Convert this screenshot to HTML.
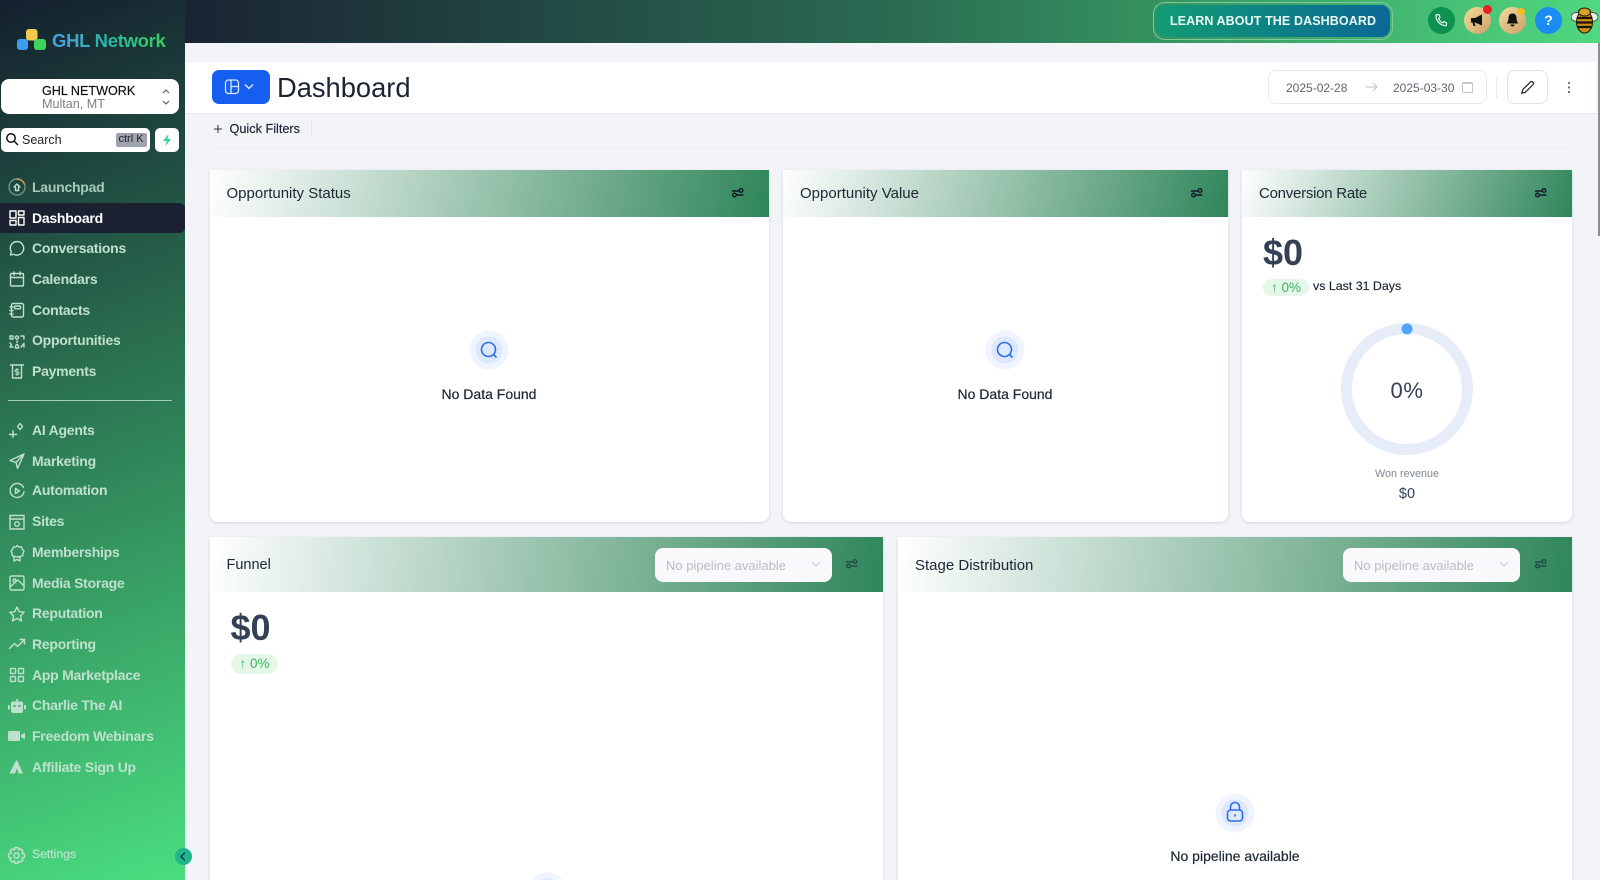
<!DOCTYPE html>
<html><head><meta charset="utf-8"><title>Dashboard</title>
<style>
*{box-sizing:border-box;margin:0;padding:0}
html,body{width:1600px;height:880px;overflow:hidden;background:#f2f4f8;font-family:"Liberation Sans",sans-serif;color:#101828}
#w{position:absolute;left:0;top:0;width:1600px;height:880px;overflow:hidden;background:#f2f4f8}
.a{position:absolute}
#side{left:0;top:0;width:185px;height:880px;background:linear-gradient(160deg,#14202e 0%,#2f8258 52%,#4ade80 100%)}
#top{left:185px;top:0;width:1415px;height:43px;background:linear-gradient(90deg,#1a2433 0%,#2a6b52 50%,#379a62 72%,#50d880 100%)}
.nav{position:absolute;left:32px;font-size:14px;letter-spacing:-.25px;font-weight:bold;color:#bfe0cd;line-height:18px;white-space:nowrap}
.ni{position:absolute;left:8px;width:18px;height:18px;fill:none;stroke:#bfe0cd;stroke-width:1.4;stroke-linecap:round;stroke-linejoin:round}
.card{position:absolute;background:#fff;border-radius:0 0 8px 8px;box-shadow:0 1px 3px rgba(16,24,40,.14);overflow:hidden}
.ch{position:absolute;left:0;top:0;right:0;background:linear-gradient(100deg,#fff 0%,#2f855a 100%);font-size:15px;color:#1d2733}
.ch span{position:absolute;left:17px;white-space:nowrap}
.fi{position:absolute;width:14px;height:14px;fill:none;stroke:#101828;stroke-width:1.4}
.sel{position:absolute;background:#f9f9fb;border-radius:8px;font-size:13px;color:#b9bcc4;line-height:36px;padding-left:11px;height:34px;width:177px}
.big{position:absolute;font-size:36px;font-weight:bold;color:#344054;line-height:36px}
.badge{position:absolute;background:#e4f7e9;color:#3fb560;border-radius:10px;font-size:13.5px;text-align:center}
.nd{position:absolute;font-size:14px;color:#1d2733;transform:translateX(-50%);white-space:nowrap;line-height:18px;-webkit-text-stroke:.2px #1d2733}
</style></head><body>
<div id="w">

<div class="a" id="side"></div>
<div class="a" id="top"></div>

<!-- logo -->
<svg class="a" style="left:15px;top:26px" width="34" height="26"><rect x="2" y="13" width="11" height="11" rx="3" fill="#3b9df0"/><rect x="11" y="3" width="11.500" height="11.500" rx="3" fill="#f5c74d"/><rect x="19" y="13" width="12" height="11" rx="3" fill="#3fd45a"/></svg>
<div class="a" style="left:52px;top:29px;font-size:18.5px;letter-spacing:-.3px;font-weight:bold;line-height:24px;background:linear-gradient(90deg,#4d9fe6,#2bb8a0 50%,#34d35c);-webkit-background-clip:text;background-clip:text;color:transparent;white-space:nowrap">GHL Network</div>

<!-- location -->
<div class="a" style="left:1px;top:79px;width:178px;height:35px;background:#fff;border-radius:8px"></div>
<div class="a" style="left:42px;top:84px;font-size:12.6px;line-height:14px;color:#111;white-space:nowrap;-webkit-text-stroke:.2px #111">GHL NETWORK</div>
<div class="a" style="left:42px;top:97px;font-size:12.6px;line-height:14px;color:#7b7f87;white-space:nowrap">Multan, MT</div>
<svg class="a" style="left:160px;top:87px" width="12" height="20" fill="none" stroke="#555" stroke-width="1.1"><path d="M3 6l3-3 3 3M3 14l3 3 3-3"/></svg>

<!-- search -->
<div class="a" style="left:1px;top:128px;width:149px;height:24px;background:#fff;border-radius:5px"></div>
<svg class="a" style="left:5px;top:132px" width="14" height="14" fill="none" stroke="#111" stroke-width="1.5"><circle cx="6" cy="6" r="4.2"/><path d="M9 9l4 4"/></svg>
<div class="a" style="left:22px;top:133px;font-size:12.5px;line-height:15px;color:#222">Search</div>
<div class="a" style="left:115.5px;top:133px;width:31px;height:14px;background:#9ea3af;border-radius:2px;font-size:11px;line-height:13px;text-align:center;color:#222">ctrl K</div>
<div class="a" style="left:155px;top:128px;width:24px;height:24px;background:#fff;border-radius:5px"></div>
<svg class="a" style="left:160px;top:133px" width="14" height="14" fill="#37d39a"><path d="M8.5 1L3 8h3.5L5.500 13 11 6H7.500z"/></svg>

<!-- nav -->
<svg class="ni" style="top:178px" viewBox="0 0 18 18"><circle cx="9" cy="9" r="8" stroke-opacity=".5"/><path d="M9 1a8 8 0 0 1 7.500 5" stroke="#d8965a"/><path d="M6 9l3-3 3 3M7.500 9v3.500h3V9"/></svg>
<div class="a" style="left:0;top:203px;width:185px;height:30px;background:#1b2130;border-radius:0 6px 6px 0"></div>
<svg class="ni" style="top:209px;stroke:#fff" viewBox="0 0 18 18"><rect x="2" y="2" width="6" height="7"/><rect x="10.500" y="2" width="5.500" height="4"/><rect x="2" y="11.500" width="6" height="4.500"/><rect x="10.500" y="8.500" width="5.500" height="7.500"/></svg>
<svg class="ni" style="top:239px" viewBox="0 0 18 18"><path d="M9 2.500a6.800 6.800 0 1 1-3.300 12.800L2.500 16l.8-3.200A6.800 6.800 0 0 1 9 2.500z"/></svg>
<svg class="ni" style="top:270px" viewBox="0 0 18 18"><rect x="2.500" y="3.500" width="13" height="12.500" rx="1"/><path d="M2.500 7.500h13M6 2v3M12 2v3"/></svg>
<svg class="ni" style="top:301px" viewBox="0 0 18 18"><rect x="3.500" y="2.500" width="12" height="13.500" rx="1.500"/><rect x="6.500" y="5" width="6" height="2.800" rx="1"/><path d="M2 6h3M2 9.500h3M2 13h3"/></svg>
<svg class="ni" style="top:332px" viewBox="0 0 18 18"><circle cx="9" cy="5.500" r="1.600"/><path d="M9 9v1.500M7.500 15a1.500 2.500 0 0 1 3 0v1h-3zM2 4h3v3H2zM13 4l3 .1-.1 3M2 11l1.500 1.500L2 15h3M13 15l3-3.500v3.500"/></svg>
<svg class="ni" style="top:362px" viewBox="0 0 18 18"><path d="M2.500 3h13M4.500 3v13h9V3"/><path d="M10.500 7.500H8.200a1 1 0 0 0 0 2.400h1.600a1 1 0 0 1 0 2.400H7.500M9 6.500v7" stroke-width="1"/></svg>

<div class="a" style="left:8px;top:400px;width:164px;height:1px;background:#a9cdb8"></div>

<svg class="ni" style="top:421px" viewBox="0 0 18 18"><path d="M12 2.500l2.600 3.100L12 8.600 9.600 5.600zM5 10v6.500M1.500 13.500h7"/></svg>
<svg class="ni" style="top:452px" viewBox="0 0 18 18"><path d="M16 2L2 8.500l6 2 1.500 6zM8 10.500L16 2"/></svg>
<svg class="ni" style="top:482px" viewBox="0 0 18 18"><path d="M15.500 5.500A7 7 0 1 0 16 10"/><path d="M7.500 6.500l4 2.500-4 2.500z"/></svg>
<svg class="ni" style="top:513px" viewBox="0 0 18 18"><rect x="2" y="2.500" width="14" height="13.500"/><path d="M2 6h14"/><circle cx="9" cy="11" r="2.300"/></svg>
<svg class="ni" style="top:544px" viewBox="0 0 18 18"><path d="M9 1.500l2 1.400 2.500.1.900 2.300 1.600 1.700-1 2.200-.3 2.500-2.400.7L9 13l-2.300-.6-2.400-.7-.3-2.500-1-2.200 1.600-1.700.9-2.300 2.500-.1zM6 13v4l3-1.500 3 1.500v-4"/></svg>
<svg class="ni" style="top:574px" viewBox="0 0 18 18"><rect x="2" y="2" width="14" height="14" rx="1.500"/><circle cx="6.500" cy="6.500" r="1.500"/><path d="M2 13l8-7 6 6"/></svg>
<svg class="ni" style="top:605px" viewBox="0 0 18 18"><path d="M9 2l2.200 4.700 5 .6-3.700 3.500 1 5.200L9 13.400 4.500 16l1-5.200L1.800 7.300l5-.6z"/></svg>
<svg class="ni" style="top:635px" viewBox="0 0 18 18"><path d="M1.500 13.500l5-5 3 3 7-7M12 4.500h4.500V9"/></svg>
<svg class="ni" style="top:666px" viewBox="0 0 18 18"><rect x="2.500" y="2.500" width="5" height="5" rx=".8"/><rect x="10.500" y="2.500" width="5" height="5" rx=".8"/><rect x="2.500" y="10.500" width="5" height="5" rx=".8"/><rect x="10.500" y="10.500" width="5" height="5" rx=".8"/></svg>
<svg class="ni" style="top:697px;fill:#bfe0cd;stroke:none" viewBox="0 0 18 18"><path d="M8.200 2h1.600v2.500H13a2 2 0 0 1 2 2V14a2 2 0 0 1-2 2H5a2 2 0 0 1-2-2V6.500a2 2 0 0 1 2-2h3.200z"/><rect x="0" y="8" width="2" height="4.500" rx="1"/><rect x="16" y="8" width="2" height="4.500" rx="1"/><circle cx="6.500" cy="9" r="1.100" fill="#3fa868"/><circle cx="11.500" cy="9" r="1.100" fill="#3fa868"/></svg>
<svg class="ni" style="top:727px;fill:#bfe0cd;stroke:none" viewBox="0 0 18 18"><rect x="0" y="4" width="12" height="10" rx="1.500"/><path d="M13 8l4-2.500v7L13 10z"/></svg>
<svg class="ni" style="top:758px;fill:#bfe0cd;stroke:none" viewBox="0 0 18 18"><path d="M8 2.500l1.200 0L15 15.500H10.500L9 10.500 7 15.500H1.500z"/></svg>
<svg class="ni" style="top:846px;left:7px;width:19px;height:19px" viewBox="0 0 18 18"><circle cx="9" cy="9" r="2.400"/><path d="M7.500 1.500h3l.5 2.200 2-1 2.100 2.100-1 2 2.400.7v3l-2.400.7 1 2-2.100 2.100-2-1-.5 2.200h-3l-.5-2.200-2 1-2.100-2.100 1-2L1.500 10.500v-3l2.400-.7-1-2L5 2.700l2 1z"/></svg>

<div class="nav" style="top:178px;opacity:.85">Launchpad</div>
<div class="nav" style="top:209px;color:#fff">Dashboard</div>
<div class="nav" style="top:239px">Conversations</div>
<div class="nav" style="top:270px">Calendars</div>
<div class="nav" style="top:301px">Contacts</div>
<div class="nav" style="top:331px">Opportunities</div>
<div class="nav" style="top:362px">Payments</div>
<div class="nav" style="top:421px">AI Agents</div>
<div class="nav" style="top:452px">Marketing</div>
<div class="nav" style="top:481px">Automation</div>
<div class="nav" style="top:512px">Sites</div>
<div class="nav" style="top:543px">Memberships</div>
<div class="nav" style="top:574px">Media Storage</div>
<div class="nav" style="top:604px">Reputation</div>
<div class="nav" style="top:635px">Reporting</div>
<div class="nav" style="top:666px">App Marketplace</div>
<div class="nav" style="top:696px">Charlie The AI</div>
<div class="nav" style="top:727px">Freedom Webinars</div>
<div class="nav" style="top:758px">Affiliate Sign Up</div>
<div class="nav" style="top:845px;font-size:12.2px;letter-spacing:0;font-weight:normal;-webkit-text-stroke:.2px #bfe0cd">Settings</div>

<div class="a" style="left:175px;top:848px;width:17px;height:17px;border-radius:50%;background:#1fb58e"></div>
<svg class="a" style="left:178px;top:851px" width="10" height="11" fill="none" stroke="#12433f" stroke-width="1.5"><path d="M7 1.500L3 5.500l4 4"/></svg>

<!-- top bar right -->
<div class="a" style="left:1153px;top:2px;width:240px;height:38px;border:1px solid #7fc9a2;border-radius:12px"></div>
<div class="a" style="left:1156px;top:5px;width:234px;height:32px;border-radius:9px;background:linear-gradient(90deg,#129b74,#0b6896);color:#eafaf3;font-size:12.5px;font-weight:bold;letter-spacing:.1px;line-height:32px;text-align:center;white-space:nowrap">LEARN ABOUT THE DASHBOARD</div>

<div class="a" style="left:1428px;top:7px;width:27px;height:27px;border-radius:50%;background:#0c9150"></div>
<svg class="a" style="left:1434px;top:13px" width="15" height="15" fill="none" stroke="#e8f7ee" stroke-width="1.2"><path d="M3 1.500l2 .2 1 2.800-1.300 1.200c.7 1.800 2 3.200 3.700 4.100l1.500-1.200 2.600 1.200v2c0 .6-.6 1-1.200.9C5.500 12 2 7.500 2 2.600c0-.6.400-1.100 1-1.100z"/></svg>

<div class="a" style="left:1463.500px;top:7px;width:27px;height:27px;border-radius:50%;background:linear-gradient(135deg,#f3dc9a,#c9a06a)"></div>
<svg class="a" style="left:1470px;top:13px" width="15" height="15" fill="#111"><path d="M1 5h4l7-3.500v11L5 9.500H4.500L5.500 13H3.500L2.500 9.500H1z"/></svg>
<div class="a" style="left:1483px;top:5px;width:9px;height:9px;border-radius:50%;background:#ee1c25"></div>

<div class="a" style="left:1499px;top:7px;width:27px;height:27px;border-radius:50%;background:linear-gradient(135deg,#f3dc9a,#c9a06a)"></div>
<svg class="a" style="left:1505px;top:12px" width="15" height="16" fill="#111"><path d="M7.500 1.500c2.800 0 4 2 4 4.500 0 3 1 4.500 2 5.500H1.500c1-1 2-2.500 2-5.500 0-2.500 1.200-4.500 4-4.500z"/><path d="M5.500 12.500h4a2 2 0 0 1-4 0z"/></svg>
<div class="a" style="left:1518px;top:8px;width:7px;height:7px;border-radius:50%;background:#f7b91c"></div>

<div class="a" style="left:1535px;top:7px;width:27px;height:27px;border-radius:50%;background:#1c8cf5;color:#fff;font-weight:bold;font-size:14px;line-height:27px;text-align:center">?</div>

<svg class="a" style="left:1571px;top:7px" width="27" height="27" viewBox="0 0 27 27"><ellipse cx="5.500" cy="10" rx="5.500" ry="4.500" fill="#ececec" stroke="#444" stroke-width=".9"/><ellipse cx="21.500" cy="10" rx="5.500" ry="4.500" fill="#ececec" stroke="#444" stroke-width=".9"/><ellipse cx="13.500" cy="15" rx="8" ry="11" fill="#c88f1d" stroke="#1d1304"/><path d="M6 11h15M5.500 15.500h16M7 20h13" stroke="#1d1304" stroke-width="2.200"/><ellipse cx="13.500" cy="5" rx="6" ry="4" fill="#d9a128" stroke="#1d1304"/></svg>

<!-- page header -->
<div class="a" style="left:185px;top:62px;width:1411px;height:52px;background:#fff;border-bottom:1px solid #e6e8ee"></div>
<div class="a" style="left:212px;top:70px;width:58px;height:34px;background:#155eef;border-radius:7px"></div>
<svg class="a" style="left:224px;top:79px" width="34" height="16" fill="none" stroke="#dbe6ff" stroke-width="1.300"><rect x="1.500" y="1" width="13" height="13.500" rx="3"/><path d="M7 1v13.500M7 7.500h7.500"/><path d="M21 5.500l4 4 4-4" stroke-width="1.500"/></svg>
<div class="a" style="left:277px;top:71px;font-size:27.3px;line-height:34px;color:#1b2433;white-space:nowrap">Dashboard</div>

<div class="a" style="left:1268px;top:70px;width:219px;height:34px;background:#fff;border:1px solid #e8eaee;border-radius:8px"></div>
<div class="a" style="left:1286px;top:80.500px;font-size:12px;line-height:15px;color:#5f6570">2025-02-28</div>
<svg class="a" style="left:1365px;top:81px" width="14" height="12" fill="none" stroke="#c0c3c9" stroke-width="1"><path d="M1 6h11M8 2l4 4-4 4"/></svg>
<div class="a" style="left:1393px;top:80.500px;font-size:12px;line-height:15px;color:#5f6570">2025-03-30</div>
<div class="a" style="left:1462px;top:82px;width:11px;height:11px;border:1px solid #c4c7cc;border-top-width:2px;border-radius:1px"></div>
<div class="a" style="left:1496px;top:77px;width:1px;height:21px;background:#eaecf0"></div>
<div class="a" style="left:1507px;top:70px;width:41px;height:34px;background:#fff;border:1px solid #dfe1e6;border-radius:8px"></div>
<svg class="a" style="left:1520px;top:80px" width="15" height="15" fill="none" stroke="#222" stroke-width="1.200"><path d="M1.800 13.200l.8-3.400L10.500 1.900a1.400 1.400 0 0 1 2 0l.6.600a1.400 1.400 0 0 1 0 2L5.200 12.400z"/></svg>
<svg class="a" style="left:1566px;top:81px" width="6" height="13" fill="#666"><circle cx="3" cy="2" r="1.100"/><circle cx="3" cy="6.500" r="1.100"/><circle cx="3" cy="11" r="1.100"/></svg>

<!-- quick filters -->
<svg class="a" style="left:213px;top:124px" width="10" height="10" fill="none" stroke="#333" stroke-width="1"><path d="M5 1v8M1 5h8"/></svg>
<div class="a" style="left:229.500px;top:121px;font-size:12.7px;line-height:16px;color:#1b2433;white-space:nowrap;-webkit-text-stroke:.15px #1b2433">Quick Filters</div>
<div class="a" style="left:311px;top:120px;width:1px;height:16px;background:#e6e8ee"></div>
<div class="a" style="left:209px;top:147px;width:1363px;height:1px;background:#eceef2"></div>

<!-- cards row 1 -->
<div class="card" style="left:209.500px;top:170px;width:559.500px;height:352px"><div class="ch" style="height:47px;background:linear-gradient(103deg,#fff 0%,#2f855a 100%)"><span style="top:15px">Opportunity Status</span></div></div>
<div class="card" style="left:783px;top:170px;width:445px;height:352px"><div class="ch" style="height:47px;background:linear-gradient(106deg,#fff 0%,#2f855a 100%)"><span style="top:15px">Opportunity Value</span></div></div>
<div class="card" style="left:1242px;top:170px;width:330px;height:352px"><div class="ch" style="height:47px;background:linear-gradient(110deg,#fff 0%,#2f855a 100%)"><span style="top:15px;letter-spacing:-.25px">Conversion Rate</span></div></div>

<svg class="fi" style="left:731px;top:186px" viewBox="0 0 14 14"><path d="M1 5h7M12.500 9H6"/><circle cx="10" cy="4.500" r="1.800"/><circle cx="3.500" cy="9" r="1.800"/></svg>
<svg class="fi" style="left:1190px;top:186px" viewBox="0 0 14 14"><path d="M1 5h7M12.500 9H6"/><circle cx="10" cy="4.500" r="1.800"/><circle cx="3.500" cy="9" r="1.800"/></svg>
<svg class="fi" style="left:1534px;top:186px" viewBox="0 0 14 14"><path d="M1 5h7M12.500 9H6"/><circle cx="10" cy="4.500" r="1.800"/><circle cx="3.500" cy="9" r="1.800"/></svg>

<!-- no data icons -->
<svg class="a" style="left:469px;top:330px" width="40" height="40" fill="none"><circle cx="20" cy="20" r="19.500" fill="#f0f4fe"/><circle cx="20" cy="20" r="13.500" fill="#dde8fd"/><circle cx="19.500" cy="19.500" r="7" stroke="#2f6fe4" stroke-width="1.600"/><path d="M24.500 24.500l2.500 2.500" stroke="#2f6fe4" stroke-width="1.600" stroke-linecap="round"/></svg>
<div class="nd" style="left:489px;top:385px">No Data Found</div>
<svg class="a" style="left:985px;top:330px" width="40" height="40" fill="none"><circle cx="20" cy="20" r="19.500" fill="#f0f4fe"/><circle cx="20" cy="20" r="13.500" fill="#dde8fd"/><circle cx="19.500" cy="19.500" r="7" stroke="#2f6fe4" stroke-width="1.600"/><path d="M24.500 24.500l2.500 2.500" stroke="#2f6fe4" stroke-width="1.600" stroke-linecap="round"/></svg>
<div class="nd" style="left:1005px;top:385px">No Data Found</div>

<!-- conversion -->
<div class="big" style="left:1263px;top:235px">$0</div>
<div class="badge" style="left:1263px;top:279px;width:46px;height:17px;line-height:17px">↑ 0%</div>
<div class="a" style="left:1313px;top:278px;font-size:12.400px;line-height:16px;color:#1b2433;white-space:nowrap;-webkit-text-stroke:.15px #1b2433">vs Last 31 Days</div>
<svg class="a" style="left:1339px;top:321px" width="136" height="136" fill="none"><circle cx="68" cy="68" r="60.500" stroke="#e6ecf8" stroke-width="11"/><circle cx="68" cy="8" r="5.500" fill="#4da6ff"/></svg>
<div class="a" style="left:1339px;top:377.500px;width:136px;text-align:center;font-size:22px;line-height:26px;color:#344054;letter-spacing:.6px">0%</div>
<div class="a" style="left:1339px;top:467px;width:136px;text-align:center;font-size:10.800px;line-height:14px;color:#7e8592">Won revenue</div>
<div class="a" style="left:1339px;top:485px;width:136px;text-align:center;font-size:14.500px;line-height:18px;color:#344054">$0</div>

<!-- cards row 2 -->
<div class="card" style="left:209.500px;top:537px;width:673.500px;height:343px;border-radius:0"><div class="ch" style="height:54.500px;background:linear-gradient(98deg,#fff 0%,#2f855a 100%)"><span style="top:20px;font-size:14.500px">Funnel</span></div></div>
<div class="card" style="left:898px;top:537px;width:674px;height:343px;border-radius:0"><div class="ch" style="height:54.500px;background:linear-gradient(98deg,#fff 0%,#2f855a 100%)"><span style="top:20px">Stage Distribution</span></div></div>

<div class="sel" style="left:655px;top:548px">No pipeline available</div>
<svg class="a" style="left:810px;top:560px" width="12" height="9" fill="none" stroke="#c6c8ce" stroke-width="1"><path d="M2 2l4 4 4-4"/></svg>
<svg class="fi" style="left:845px;top:557px;opacity:.55" viewBox="0 0 14 14"><path d="M1 5h7M12.500 9H6"/><circle cx="10" cy="4.500" r="1.800"/><circle cx="3.500" cy="9" r="1.800"/></svg>
<div class="sel" style="left:1343px;top:548px">No pipeline available</div>
<svg class="a" style="left:1498px;top:560px" width="12" height="9" fill="none" stroke="#c6c8ce" stroke-width="1"><path d="M2 2l4 4 4-4"/></svg>
<svg class="fi" style="left:1534px;top:557px;opacity:.55" viewBox="0 0 14 14"><path d="M1 5h7M12.500 9H6"/><circle cx="10" cy="4.500" r="1.800"/><circle cx="3.500" cy="9" r="1.800"/></svg>

<div class="big" style="left:230.500px;top:610px">$0</div>
<div class="badge" style="left:231px;top:654px;width:47px;height:20px;line-height:20px">↑ 0%</div>

<svg class="a" style="left:527px;top:872px" width="40" height="8" fill="none"><circle cx="20" cy="20" r="19.500" fill="#f0f4fe"/><circle cx="20" cy="20" r="13.500" fill="#dde8fd"/></svg>
<svg class="a" style="left:1215px;top:793px" width="40" height="40" fill="none"><circle cx="20" cy="20" r="19.500" fill="#f0f4fe"/><circle cx="20" cy="20" r="13.500" fill="#dde8fd"/><rect x="12.500" y="17" width="15" height="11" rx="3" stroke="#2f6fe4" stroke-width="1.600"/><path d="M15.500 17v-3a4.500 4.500 0 0 1 9 0v3" stroke="#2f6fe4" stroke-width="1.600"/><path d="M20 21.500v2" stroke="#2f6fe4" stroke-width="1.800"/></svg>
<div class="nd" style="left:1235px;top:847px">No pipeline available</div>

<!-- scrollbar sliver -->
<div class="a" style="left:1598px;top:43px;width:2px;height:193px;background:#8b8e94"></div>

</div>
</body></html>
